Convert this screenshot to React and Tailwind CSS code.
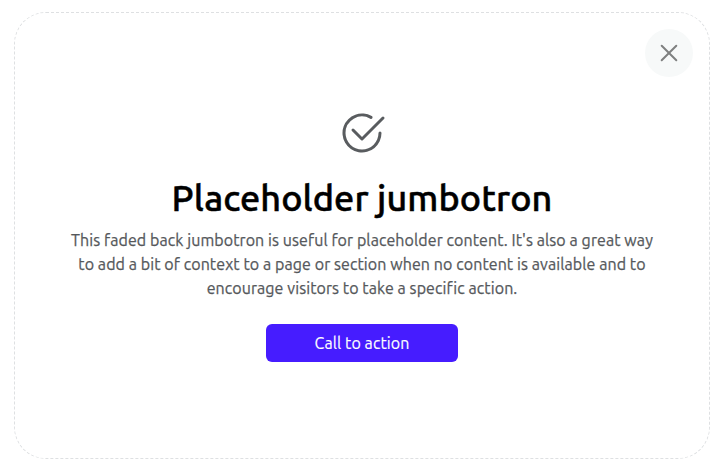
import React from "react";

export default function App() {
  return (
    <main className="h-[471px] bg-white pt-3 pr-[10px] pb-3 pl-[14px] font-['Ubuntu','Noto_Sans',sans-serif]">
      <section className="flex h-[447px] flex-col rounded-[32px] border border-dashed border-[#dee0e2] text-center">
        <button
          aria-label="Close"
          className="mt-4 mr-4 flex size-12 shrink-0 items-center justify-center self-end rounded-full bg-[#f7f9f9]"
        >
          <svg className="size-[18px]" viewBox="0 0 18 18" fill="none" stroke="#7f8080" strokeWidth="2" strokeLinecap="round">
            <path d="M1.7 1.7 16.3 16.3M16.3 1.7 1.7 16.3" />
          </svg>
        </button>
        <svg className="mt-8 size-12 shrink-0 self-center" viewBox="0 0 16 16" fill="#595c5f">
          <path d="M2.5 8a5.5 5.5 0 0 1 8.25-4.764.5.5 0 0 0 .5-.866A6.5 6.5 0 1 0 14.5 8a.5.5 0 0 0-1 0 5.5 5.5 0 1 1-11 0z" />
          <path d="M15.354 3.354a.5.5 0 0 0-.708-.708L8 9.293 5.354 6.646a.5.5 0 1 0-.708.708l3 3a.5.5 0 0 0 .708 0l7-7z" />
        </svg>
        <h1 className="mt-[17px] text-[36px] leading-[48px] font-medium tracking-[0.08px] whitespace-nowrap text-black [-webkit-text-stroke:0.5px_#000]">
          Placeholder jumbotron
        </h1>
        <p className="mt-[6px] text-base leading-6 tracking-[0.083px] whitespace-nowrap text-[#55585b] [-webkit-text-stroke:0.25px_#55585b]">
          <span className="block">This faded back jumbotron is useful for placeholder content. It's also a great way</span>
          <span className="block">to add a bit of context to a page or section when no content is available and to</span>
          <span className="block">encourage visitors to take a specific action.</span>
        </p>
        <button className="mt-6 h-[38px] w-48 shrink-0 self-center rounded-md bg-[#461cff] text-base leading-6 tracking-[0.086px] text-white [-webkit-text-stroke:0.15px_#fff]">
          Call to action
        </button>
      </section>
    </main>
  );
}
